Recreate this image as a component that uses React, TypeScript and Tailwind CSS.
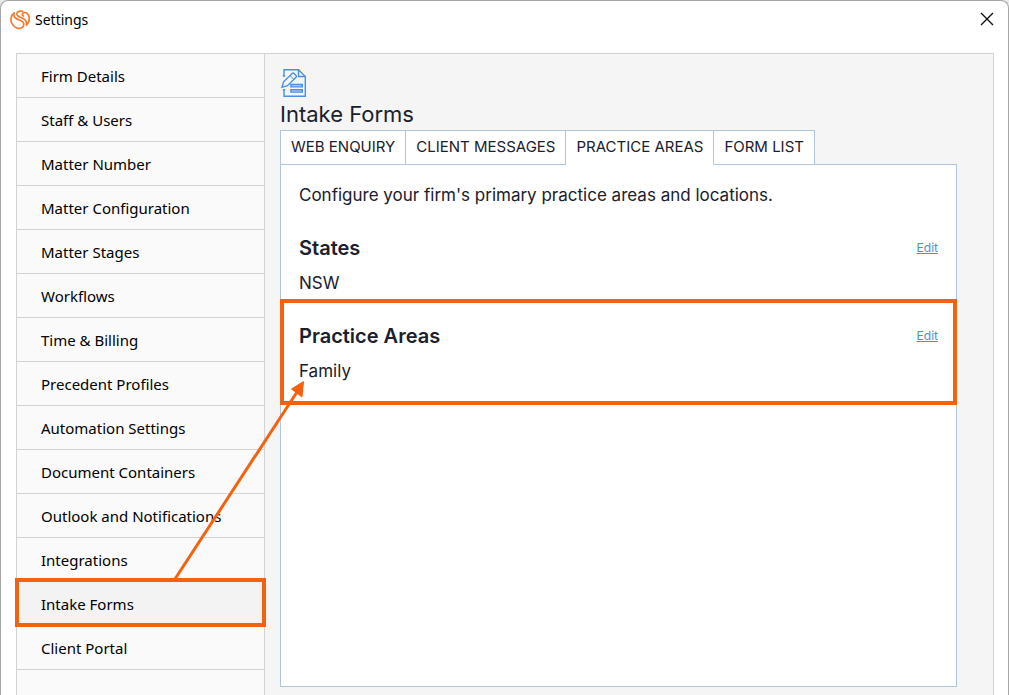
import React, { useState } from 'react';

const menuItems = [
  'Firm Details',
  'Staff & Users',
  'Matter Number',
  'Matter Configuration',
  'Matter Stages',
  'Workflows',
  'Time & Billing',
  'Precedent Profiles',
  'Automation Settings',
  'Document Containers',
  'Outlook and Notifications',
  'Integrations',
  'Intake Forms',
  'Client Portal',
];

const tabs = ['WEB ENQUIRY', 'CLIENT MESSAGES', 'PRACTICE AREAS', 'FORM LIST'];

const sections = [
  { title: 'States', value: 'NSW', highlighted: false },
  { title: 'Practice Areas', value: 'Family', highlighted: true },
];

const LogoIcon = () => (
  <svg className="h-5 w-5" viewBox="0 0 20 20" fill="none" stroke="#f47b30" strokeWidth="1.7" strokeLinecap="round" strokeLinejoin="round" aria-hidden="true">
    <path d="M4.200 2.900C0.800 5.200 0 10.200 2.100 13.900C4.300 17.700 8.900 19.600 12 17.600C14.600 15.900 14.300 12.400 11.600 11C8.800 9.600 5.200 9 4.200 6.400C3.700 5.200 3.800 4 4.200 2.900Z" />
    <path d="M12.600 1.300C9.800 0.600 7 1.400 6.800 3.800C6.700 6 9 6.900 11.600 7.800C15 9 17 10.800 16.400 15.200C18.600 13 19.700 9.800 19 6.600C18.400 3.600 15.800 1.800 13.400 2.800C11.800 3.600 12 5.200 13.400 5.900" />
  </svg>
);

const FormIcon = () => (
  <svg className="ml-px h-[30px] w-[26px]" viewBox="0 0 26 30" fill="none" stroke="#4a90e2" strokeWidth="1.4" aria-hidden="true">
    <path d="M3 8V1.7H17.5L24.3 8.5V28.3H3V21.5" />
    <path d="M17.5 1.7V8.5H24.3" />
    <path d="M1.8 8H4.2M1.8 21.8H4.200" />
    <path d="M1 19.3L2.6 13.8L10.9 5.7C11.6 5 12.6 5 13.3 5.7L14.8 7.2C15.5 7.9 15.5 8.9 14.8 9.6L6.5 17.7Z" />
    <path d="M9 7.6L12.9 11.4" strokeWidth="1" />
    <path d="M9.9 16.5H21.3V18.9H9.9ZM9.9 21.7H21.3V24.1H9.9Z" fill="#b9d5f6" />
  </svg>
);

const CloseIcon = () => (
  <svg className="h-3.5 w-3.5" viewBox="0 0 14 14" fill="none" stroke="#111111" strokeWidth="1.4" aria-hidden="true">
    <path d="M1 1L13 13M13 1L1 13" />
  </svg>
);

// Callout drawn over the highlighted menu item, pointing at the practice areas value
const MenuCallout = () => (
  <>
    <span className="pointer-events-none absolute -inset-x-0.5 -top-1 -bottom-0.5 z-10 border-4 border-[#f5620f]" />
    <svg className="pointer-events-none absolute bottom-full left-[150px] z-20 h-[204px] w-[144px]" viewBox="0 0 144 204" aria-hidden="true">
      <path d="M8 201L130 14" stroke="#f5620f" strokeWidth="3" />
      <path d="M136.500 3.500L124.500 11L135 19Z" fill="#f5620f" stroke="#f5620f" strokeWidth="1" />
    </svg>
  </>
);

const App = () => {
  const [activeItem, setActiveItem] = useState('Intake Forms');
  const [activeTab, setActiveTab] = useState('PRACTICE AREAS');

  return (
    <div className="min-h-screen flex flex-col bg-[#e9e9e9]">
      <div className="grow flex flex-col pl-[15px] pr-3.5 rounded-t-lg border border-b-0 border-[#a6a6a6] bg-white">
        {/* Title bar */}
        <header className="flex h-[52px] items-start justify-between pt-2 -ml-1.5">
          <div className="flex items-center gap-[5px]">
            <LogoIcon />
            <h1 className="pt-px font-['Noto_Sans','Open_Sans',sans-serif] text-sm text-black">Settings</h1>
          </div>
          <button type="button" aria-label="Close" className="pt-[3px]">
            <CloseIcon />
          </button>
        </header>

        <div className="grow flex border border-b-0 border-[#d2d2d2] bg-[#f5f5f5]">
          {/* Sidebar */}
          <nav className="w-[248px] shrink-0 border-r border-[#d2d2d2] bg-[#fafafa]">
            <ul>
              {menuItems.map((item) => (
                <li key={item} className="relative border-b border-[#d2d2d2]">
                  <button
                    type="button"
                    onClick={() => setActiveItem(item)}
                    className={`flex h-[43px] w-full items-center pt-0.5 pl-6 text-left font-['Noto_Sans','Open_Sans',sans-serif] text-[15px] text-black ${
                      activeItem === item ? 'bg-[#f3f3f3]' : 'hover:bg-[#f3f3f3]'
                    }`}
                  >
                    {item}
                  </button>
                  {item === 'Intake Forms' && <MenuCallout />}
                </li>
              ))}
            </ul>
          </nav>

          {/* Content */}
          <main className="grow flex flex-col pl-[15px] pr-9 pt-3.5 pb-2 font-['Inter',sans-serif] text-[#1a202c]">
            <FormIcon />
            <h2 className="pt-0.5 pb-0.5 text-[22px] leading-7">Intake Forms</h2>

            <div role="tablist" className="flex h-[35px] border-l border-[#b0c6de]">
              {tabs.map((tab) => (
                <button
                  key={tab}
                  type="button"
                  role="tab"
                  aria-selected={activeTab === tab}
                  onClick={() => setActiveTab(tab)}
                  className={`relative border-t border-r border-b border-[#b0c6de] bg-white px-2.5 text-[15px] ${
                    activeTab === tab ? 'border-b-white' : ''
                  }`}
                >
                  {tab}
                </button>
              ))}
            </div>

            <div role="tabpanel" className="grow -mt-px border border-[#b0c6de] bg-white pt-[18px]">
              <p className="px-[18px] pb-1 text-[17px] leading-6">
                Configure your firm's primary practice areas and locations.
              </p>
              {sections.map((section) => (
                <section
                  key={section.title}
                  className={`relative px-[18px] pt-[23px] ${section.highlighted ? 'pb-[22px]' : 'pb-1'}`}
                >
                  <div className="flex items-center justify-between">
                    <h3 className="text-xl leading-7 font-semibold">{section.title}</h3>
                    <a href="#edit" className="text-xs text-[#4a90e2] underline">Edit</a>
                  </div>
                  <p className="pt-[9px] text-[17px] leading-6">{section.value}</p>
                  {section.highlighted && (
                    <span className="pointer-events-none absolute -inset-x-px inset-y-0 border-4 border-[#f5620f]" />
                  )}
                </section>
              ))}
            </div>
          </main>
        </div>
      </div>
    </div>
  );
};

export default App;
